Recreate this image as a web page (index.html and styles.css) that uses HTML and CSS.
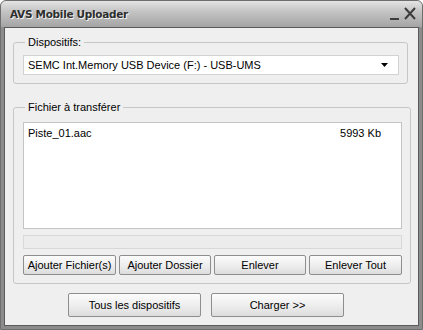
FILE: index.html
```html
<!DOCTYPE html>
<html lang="fr">
<head>
  <meta charset="UTF-8" />
  <title>AVS Mobile Uploader</title>
  <link rel="stylesheet" href="styles.css">
</head>
<body>
  <div class="window">
    <div class="titlebar">
      <span class="title">AVS Mobile Uploader</span>
      <span class="controls">
        <svg width="30" height="14" viewBox="0 0 30 14">
          <rect x="2" y="11" width="9" height="2" fill="#3c3c3c"/>
          <path d="M17 1 L27 12 M27 1 L17 12" stroke="#3c3c3c" stroke-width="2"/>
        </svg>
      </span>
    </div>
    <div class="client">
      <fieldset class="group devices">
        <legend>Dispositifs:</legend>
        <div class="combo">
          <span>SEMC Int.Memory USB Device (F:) - USB-UMS</span>
          <svg class="arrow" width="8" height="4" viewBox="0 0 8 4"><path d="M0 0 H7 L3.5 4 Z" fill="#000"/></svg>
        </div>
      </fieldset>

      <fieldset class="group files">
        <legend>Fichier à transférer</legend>
        <div class="list">
          <div class="row"><span>Piste_01.aac</span><span>5993 Kb</span></div>
        </div>
        <div class="progress"></div>
        <div class="actions">
          <button>Ajouter Fichier(s)</button>
          <button>Ajouter Dossier</button>
          <button>Enlever</button>
          <button>Enlever Tout</button>
        </div>
      </fieldset>

      <div class="footer">
        <button class="big">Tous les dispositifs</button>
        <button class="big">Charger &gt;&gt;</button>
      </div>
    </div>
  </div>
</body>
</html>
```

FILE: styles.css
```css
body {
  margin: 0;
  background: #ffffff;
  font-family: Tahoma, "Liberation Sans", Arial, sans-serif;
  font-size: 11px;
  color: #000;
}
.window {
  width: 423px;
  height: 330px;
  box-sizing: border-box;
  background: #8c8c8c;
  border: 1px solid #6e6e6e;
  border-radius: 6px 6px 0 0;
  display: flex;
  flex-direction: column;
}
.titlebar {
  height: 26px;
  display: flex;
  align-items: center;
  justify-content: space-between;
  padding: 0 4px 0 9px;
  background: linear-gradient(#e4e4e4, #c4c4c4 40%, #a4a4a4);
  border-radius: 5px 5px 0 0;
}
.title {
  font-family: "DejaVu Sans", sans-serif;
  font-weight: bold;
  font-size: 10.5px;
  color: #2e2e2e;
  text-shadow: 1px 1px 0 #f4f4f4;
  letter-spacing: -0.3px;
}
.controls svg {
  display: block;
}
.client {
  flex: 1;
  margin: 0 3px 3px 3px;
  border: 1px solid #5a5a5a;
  background: #efefef;
  padding: 7px 10px 0 8px;
}
.group {
  border: 1px solid #c6c6c6;
  border-radius: 3px;
  margin: 0;
  padding: 0 8px 0 9px;
}
.group legend {
  padding: 0 3px;
  margin-left: 2px;
  line-height: 14px;
}
.devices {
  padding-top: 6px;
  padding-bottom: 8px;
}
.combo {
  height: 20px;
  box-sizing: border-box;
  background: #fff;
  border: 1px solid #d2d2d2;
  display: flex;
  align-items: center;
  justify-content: space-between;
  padding: 0 9px 0 4px;
}
.arrow {
  display: block;
}
.files {
  margin-top: 16px;
  padding-top: 8px;
  padding-bottom: 8px;
}
.list {
  height: 107px;
  box-sizing: border-box;
  background: #fff;
  border: 1px solid #c4c4c4;
  padding: 4px 20px 0 4px;
}
.row {
  display: flex;
  justify-content: space-between;
}
.progress {
  margin-top: 6px;
  height: 14px;
  box-sizing: border-box;
  background: #ececec;
  border: 1px solid #d8d8d8;
}
.actions {
  margin-top: 6px;
  display: grid;
  grid-template-columns: 93px 92px 92px 93px;
  gap: 3px;
}
button {
  font-family: inherit;
  font-size: 11px;
  color: #000;
  height: 20px;
  padding: 0;
  border: 1px solid #8e8e8e;
  border-radius: 2px;
  background: linear-gradient(#fcfcfc, #ebebeb 60%, #dcdcdc);
}
.footer {
  display: flex;
  gap: 10px;
  padding: 9px 0 0 55px;
}
.big {
  width: 133px;
  height: 24px;
}
```
